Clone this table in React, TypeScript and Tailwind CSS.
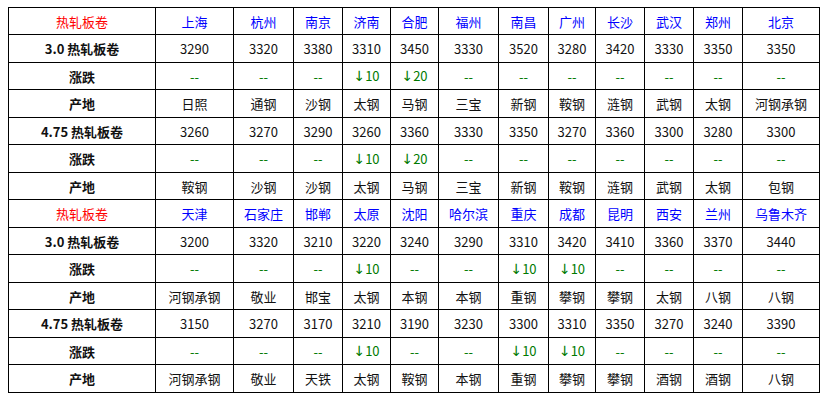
import { Fragment } from "react";

const widths = [147, 78, 60, 49, 48, 48, 60, 50, 47, 49, 49, 49, 77];

type Block = {
  cities: string[];
  rows: { label: string; prices: string[]; change: string[]; origin: string[] }[];
};

const blocks: Block[] = [
  {
    cities: ["上海", "杭州", "南京", "济南", "合肥", "福州", "南昌", "广州", "长沙", "武汉", "郑州", "北京"],
    rows: [
      {
        label: "3.0 热轧板卷",
        prices: ["3290", "3320", "3380", "3310", "3450", "3330", "3520", "3280", "3420", "3330", "3350", "3350"],
        change: ["--", "--", "--", "↓10", "↓20", "--", "--", "--", "--", "--", "--", "--"],
        origin: ["日照", "通钢", "沙钢", "太钢", "马钢", "三宝", "新钢", "鞍钢", "涟钢", "武钢", "太钢", "河钢承钢"],
      },
      {
        label: "4.75 热轧板卷",
        prices: ["3260", "3270", "3290", "3260", "3360", "3330", "3350", "3270", "3360", "3300", "3280", "3300"],
        change: ["--", "--", "--", "↓10", "↓20", "--", "--", "--", "--", "--", "--", "--"],
        origin: ["鞍钢", "沙钢", "沙钢", "太钢", "马钢", "三宝", "新钢", "鞍钢", "涟钢", "武钢", "太钢", "包钢"],
      },
    ],
  },
  {
    cities: ["天津", "石家庄", "邯郸", "太原", "沈阳", "哈尔滨", "重庆", "成都", "昆明", "西安", "兰州", "乌鲁木齐"],
    rows: [
      {
        label: "3.0 热轧板卷",
        prices: ["3200", "3320", "3210", "3220", "3240", "3290", "3310", "3420", "3410", "3360", "3370", "3440"],
        change: ["--", "--", "--", "↓10", "--", "--", "↓10", "↓10", "--", "--", "--", "--"],
        origin: ["河钢承钢", "敬业", "邯宝", "太钢", "本钢", "本钢", "重钢", "攀钢", "攀钢", "太钢", "八钢", "八钢"],
      },
      {
        label: "4.75 热轧板卷",
        prices: ["3150", "3270", "3170", "3210", "3190", "3230", "3300", "3310", "3350", "3270", "3240", "3390"],
        change: ["--", "--", "--", "↓10", "--", "--", "↓10", "↓10", "--", "--", "--", "--"],
        origin: ["河钢承钢", "敬业", "天铁", "太钢", "鞍钢", "本钢", "重钢", "攀钢", "攀钢", "酒钢", "酒钢", "八钢"],
      },
    ],
  },
];

const cell = "border border-black text-center align-middle p-0 whitespace-nowrap";

function Value({ v }: { v: string }) {
  if (v.startsWith("↓")) {
    return (
      <>
        <span className="font-['DejaVu_Sans',sans-serif] text-[14px]">↓</span>
        {v.slice(1)}
      </>
    );
  }
  return <>{v}</>;
}

function Row({
  label,
  labelClass,
  values,
  valueClass,
  tall,
}: {
  label: string;
  labelClass: string;
  values: string[];
  valueClass: string;
  tall: boolean;
}) {
  return (
    <tr className={tall ? "h-[28px]" : "h-[27px]"}>
      <td className={`${cell} ${labelClass}`}>{label}</td>
      {values.map((v, i) => (
        <td key={i} className={`${cell} ${valueClass}`}>
          <Value v={v} />
        </td>
      ))}
    </tr>
  );
}

export default function App() {
  let n = 0;
  const next = () => n++ % 2 === 1;
  return (
    <div className="min-h-screen bg-white pt-[7px] pl-2 text-[13px] leading-none text-[#111] font-['Noto_Sans_CJK_SC','Noto_Sans',sans-serif]">
      <table className="border-collapse table-fixed w-[811px]">
        <colgroup>
          {widths.map((w, i) => (
            <col key={i} style={{ width: w }} />
          ))}
        </colgroup>
        <tbody>
          {blocks.map((b, bi) => (
            <Fragment key={bi}>
              <Row label="热轧板卷" labelClass="text-[#ff0000]" values={b.cities} valueClass="text-[#0000ff]" tall={next()} />
              {b.rows.map((r, ri) => (
                <Fragment key={ri}>
                  <Row label={r.label} labelClass="font-bold" values={r.prices} valueClass="" tall={next()} />
                  <Row label="涨跌" labelClass="font-bold" values={r.change} valueClass="text-[#007a00]" tall={next()} />
                  <Row label="产地" labelClass="font-bold" values={r.origin} valueClass="" tall={next()} />
                </Fragment>
              ))}
            </Fragment>
          ))}
        </tbody>
      </table>
    </div>
  );
}
